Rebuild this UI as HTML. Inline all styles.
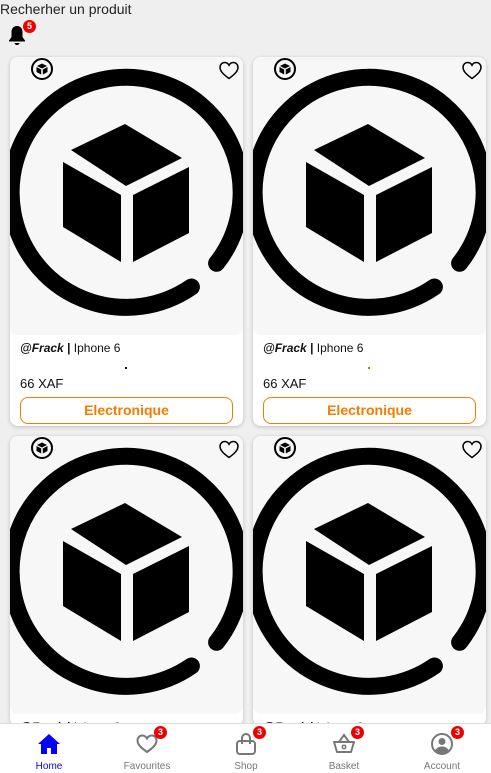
<!DOCTYPE html>
<html style="overflow:hidden;height:773px"><head><meta charset="utf-8"><style>
*{margin:0;padding:0;box-sizing:border-box}
body{width:491px;height:773px;overflow:hidden;background:#efefef;font-family:"Liberation Sans",sans-serif;position:relative}
.title{position:absolute;left:0;top:1px;font-size:14px;color:#222}
.bell{position:absolute;left:7px;top:24px}
.badge{position:absolute;background:#e00;color:#fff;border-radius:50%;font-size:9px;font-weight:bold;width:13px;height:13px;line-height:13px;text-align:center}
.card{position:absolute;width:233px;height:369px;background:#fff;border-radius:8px;box-shadow:0 1px 4px rgba(0,0,0,.2);overflow:hidden}
.img{position:absolute;left:0;top:0;width:233px;height:278px;background:#f7f7f7;border-radius:8px}
.meta{position:absolute;left:10px;top:284px;font-size:12px;color:#111}
.dot{position:absolute;top:310px;width:2px;height:2px}
.price{position:absolute;left:10px;top:319px;font-size:13px;color:#111}
.btn{position:absolute;left:10px;top:340px;width:213px;height:27px;border:1px solid #f57c00;border-radius:8px;color:#f57c00;font-weight:bold;font-size:14px;text-align:center;line-height:25px}
.nav{position:absolute;left:0;top:723px;width:491px;height:50px;background:#fff;border-top:1px solid #ddd}
.ni{position:absolute;top:0;width:98px;text-align:center;font-size:10px;color:#777}
.ni svg{position:absolute;left:37px;top:8px}
.ni span{position:absolute;left:0;right:0;top:37px}
</style></head><body>
<div class="title">Recherher un produit</div>
<svg class="bell" width="20" height="22" viewBox="0 0 20 22"><path d="M10 2c-3.5 0-5.5 2.6-5.5 6v5L2 16.5v1h16v-1L15.5 13V8c0-3.4-2-6-5.5-6z" fill="#000"/><path d="M7.5 19h5a2.5 2 0 0 1-5 0z" fill="#000"/></svg>
<div class="badge" style="left:23px;top:20px">5</div>

<svg width="0" height="0" style="position:absolute"><defs>
<g id="big">
<path d="M 216.6 263.3 A 115 115 0 1 0 191.4 287" fill="none" stroke="#000" stroke-width="17" stroke-linecap="round" transform="translate(-10,-57)"/>
<g transform="translate(-10,-57)" fill="#000">
<polygon points="125,124 182,158 126,186 71,150"/>
<polygon points="63,162 121,195 121,262 63,227"/>
<polygon points="133,195 189,167 189,233 133,262"/>
</g></g>
<g id="sm">
<circle cx="0" cy="0" r="10" fill="none" stroke="#000" stroke-width="2"/>
<polygon points="0,-5.5 5,-3 0,-0.5 -5,-3" fill="#000"/>
<polygon points="-5.5,-2 -0.8,0.5 -0.8,5.5 -5.5,3" fill="#000"/>
<polygon points="0.8,0.5 5.5,-2 5.5,3 0.8,5.5" fill="#000"/>
</g>
<path id="heart" d="M10 17.5C3 12.5 1 9.5 1 6.3 1 3.5 3.2 1.5 5.7 1.5 7.6 1.5 9.1 2.6 10 4.2 10.9 2.6 12.4 1.5 14.3 1.5 16.8 1.5 19 3.5 19 6.3 19 9.5 17 12.5 10 17.5z" fill="none" stroke="#000" stroke-width="1.5"/>
</defs></svg>

<div class="card" style="left:10px;top:57px"><div class="img"><svg width="233" height="278"><use href="#big"/><use href="#sm" x="32" y="12"/><use href="#heart" x="209" y="4"/></svg></div>
<div class="meta"><i><b>@Frack</b></i> <b>|</b> Iphone 6</div><div class="dot" style="left:115px;background:#00a"></div><div class="price">66 XAF</div><div class="btn">Electronique</div></div>
<div class="card" style="left:253px;top:57px"><div class="img"><svg width="233" height="278"><use href="#big"/><use href="#sm" x="32" y="12"/><use href="#heart" x="209" y="4"/></svg></div>
<div class="meta"><i><b>@Frack</b></i> <b>|</b> Iphone 6</div><div class="dot" style="left:115px;background:#e60"></div><div class="price">66 XAF</div><div class="btn">Electronique</div></div>
<div class="card" style="left:10px;top:436px;height:290px"><div class="img"><svg width="233" height="278"><use href="#big"/><use href="#sm" x="32" y="12"/><use href="#heart" x="209" y="4"/></svg></div>
<div class="meta"><i><b>@Frack</b></i> <b>|</b> Iphone 6</div></div>
<div class="card" style="left:253px;top:436px;height:290px"><div class="img"><svg width="233" height="278"><use href="#big"/><use href="#sm" x="32" y="12"/><use href="#heart" x="209" y="4"/></svg></div>
<div class="meta"><i><b>@Frack</b></i> <b>|</b> Iphone 6</div></div>

<div class="nav">
<div class="ni" style="left:0;color:#00f"><svg width="24" height="24" viewBox="0 0 24 24"><path d="M12 2L1 12h3v10h6v-6h4v6h6V12h3z" fill="#00f"/></svg><span>Home</span></div>
<div class="ni" style="left:98px"><svg width="24" height="24" viewBox="0 0 24 24"><path d="M12 20C5 15 2.5 12 2.5 8.5 2.5 5.5 4.8 3.5 7.3 3.5 9.3 3.5 11 4.8 12 6.5 13 4.8 14.7 3.5 16.7 3.5 19.2 3.5 21.5 5.5 21.5 8.5 21.5 12 19 15 12 20z" fill="none" stroke="#777" stroke-width="2"/></svg><div class="badge" style="left:56px;top:2px">3</div><span>Favourites</span></div>
<div class="ni" style="left:197px"><svg width="24" height="24" viewBox="0 0 24 24"><rect x="3" y="9" width="18" height="13" rx="3" fill="none" stroke="#777" stroke-width="2"/><path d="M8 12V6a4 4 0 0 1 8 0v6" fill="none" stroke="#777" stroke-width="2"/></svg><div class="badge" style="left:56px;top:2px">3</div><span>Shop</span></div>
<div class="ni" style="left:295px"><svg width="24" height="24" viewBox="0 0 24 24"><path d="M2 10h20l-3 10H5z" fill="none" stroke="#777" stroke-width="2" stroke-linejoin="round"/><path d="M7 10l5-7 5 7" fill="none" stroke="#777" stroke-width="2"/><circle cx="12" cy="15" r="1.7" fill="none" stroke="#777" stroke-width="1.5"/></svg><div class="badge" style="left:56px;top:2px">3</div><span>Basket</span></div>
<div class="ni" style="left:393px"><svg width="24" height="24" viewBox="0 0 24 24"><circle cx="12" cy="12" r="10" fill="none" stroke="#777" stroke-width="2"/><circle cx="12" cy="9.5" r="3.5" fill="#777"/><path d="M5 18.5c2-3 4.3-4 7-4s5 1 7 4a10 10 0 0 1-14 0z" fill="#777"/></svg><div class="badge" style="left:58px;top:2px">3</div><span>Account</span></div>
</div>
</body></html>
